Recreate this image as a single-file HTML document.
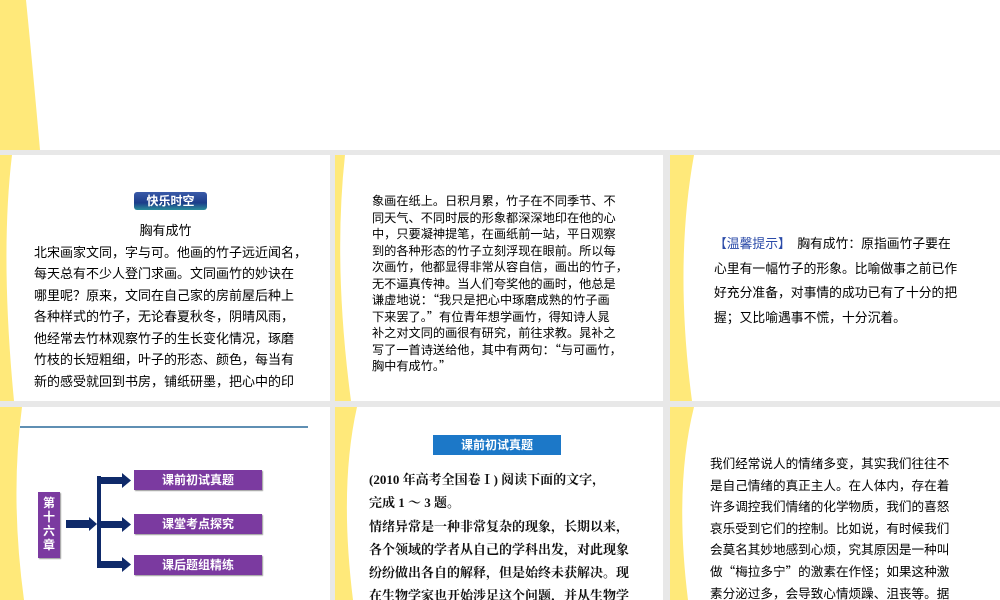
<!DOCTYPE html>
<html><head><meta charset="utf-8"><style>
body{margin:0;width:1000px;height:600px;background:#e8e8e8;position:relative;overflow:hidden;font-family:"Liberation Serif","Noto Serif CJK SC","Noto Sans CJK SC",serif;color:#111}
.s{position:absolute;background:#fff;overflow:hidden}
.s svg.d{position:absolute;left:0;top:0}
.t{position:absolute;font-weight:bold;white-space:nowrap}
.p{position:absolute;background:#7b3aa0;color:#fff;font:bold 12px "Liberation Sans","Noto Sans CJK SC",sans-serif;text-align:center;box-shadow:1px 1px 1px #999}
.cj{font-family:"Noto Sans CJK SC",sans-serif;font-weight:normal;color:#000}
</style></head><body>
<div class="s" style="left:0;top:0;width:1000px;height:150px">
<svg class="d" width="60" height="150"><path d="M0 0H26 Q32 60 40 150H0Z" fill="#ffe97a"/></svg></div>

<div class="s" style="left:0;top:155px;width:330px;height:246px">
<svg class="d" width="40" height="246"><path d="M0 0H12 Q0 100 14 246H0Z" fill="#ffe97a"/></svg>
<div style="position:absolute;left:134px;top:37px;width:73px;height:18px;border-radius:3px;background:linear-gradient(#3a5aa8,#1c3d8a 60%,#2a8c9a);color:#fff;font:bold 12px 'Liberation Sans','Noto Sans CJK SC',sans-serif;text-align:center;line-height:18px">快乐时空</div>
<div class="t cj" style="left:34px;top:64px;font-size:13px;line-height:21.5px">
<div style="text-align:center;width:263px">胸有成竹</div>
北宋画家文同，字与可。他画的竹子远近闻名，<br>每天总有不少人登门求画。文同画竹的妙诀在<br>哪里呢？原来，文同在自己家的房前屋后种上<br>各种样式的竹子，无论春夏秋冬，阴晴风雨，<br>他经常去竹林观察竹子的生长变化情况，琢磨<br>竹枝的长短粗细，叶子的形态、颜色，每当有<br>新的感受就回到书房，铺纸研墨，把心中的印</div></div>

<div class="s" style="left:335px;top:155px;width:328px;height:246px">
<svg class="d" width="40" height="246"><path d="M0 0H10 Q-2 110 16 246H0Z" fill="#ffe97a"/></svg>
<div class="t cj" style="left:37px;top:37px;font-size:12.2px;line-height:16.5px">象画在纸上。日积月累，竹子在不同季节、不<br>同天气、不同时辰的形象都深深地印在他的心<br>中，只要凝神提笔，在画纸前一站，平日观察<br>到的各种形态的竹子立刻浮现在眼前。所以每<br>次画竹，他都显得非常从容自信，画出的竹子，<br>无不逼真传神。当人们夸奖他的画时，他总是<br>谦虚地说：“我只是把心中琢磨成熟的竹子画<br>下来罢了。”有位青年想学画竹，得知诗人晁<br>补之对文同的画很有研究，前往求教。晁补之<br>写了一首诗送给他，其中有两句：“与可画竹，<br>胸中有成竹。”</div></div>

<div class="s" style="left:670px;top:155px;width:330px;height:246px">
<svg class="d" width="40" height="246"><path d="M0 0H24 Q4 110 22 246H0Z" fill="#ffe97a"/></svg>
<div class="t cj" style="left:44px;top:76px;font-size:12.8px;line-height:24.5px"><span style="color:#2a4aa8">【温馨提示】</span>　胸有成竹：原指画竹子要在<br>心里有一幅竹子的形象。比喻做事之前已作<br>好充分准备，对事情的成功已有了十分的把<br>握；又比喻遇事不慌，十分沉着。</div></div>

<div class="s" style="left:0;top:407px;width:330px;height:193px">
<svg class="d" width="330" height="193"><path d="M0 0H22 Q10 90 24 193H0Z" fill="#ffe97a"/>
<line x1="20" y1="20" x2="308" y2="20" stroke="#2a6a9a" stroke-width="1.5"/>
<rect x="66" y="113" width="25" height="8" fill="#0f2a6a"/><path d="M89 110 L97 117 L89 124Z" fill="#0f2a6a"/>
<rect x="97" y="69" width="4" height="92" fill="#0f2a6a"/>
<g fill="#0f2a6a"><rect x="100" y="70" width="24" height="7"/><path d="M122 66L131 73.5L122 81Z"/>
<rect x="100" y="114" width="24" height="7"/><path d="M122 110L131 117.5L122 125Z"/>
<rect x="100" y="154" width="24" height="7"/><path d="M122 150L131 157.5L122 165Z"/></g></svg>
<div class="p" style="left:38px;top:85px;width:22px;height:66px;line-height:14px;padding-top:4px;box-sizing:border-box">第<br>十<br>六<br>章</div>
<div class="p" style="left:134px;top:63px;width:128px;height:20px;line-height:20px">课前初试真题</div>
<div class="p" style="left:134px;top:107px;width:128px;height:20px;line-height:20px">课堂考点探究</div>
<div class="p" style="left:134px;top:148px;width:128px;height:20px;line-height:20px">课后题组精练</div></div>

<div class="s" style="left:335px;top:407px;width:328px;height:193px">
<svg class="d" width="40" height="193"><path d="M0 0H22 Q4 80 18 193H0Z" fill="#ffe97a"/></svg>
<div style="position:absolute;left:98px;top:28px;width:128px;height:20px;background:#1c78c8;color:#fff;font:bold 12px 'Liberation Sans','Noto Sans CJK SC',sans-serif;text-align:center;line-height:20px">课前初试真题</div>
<div class="t" style="left:34px;top:61px;font-size:13px;line-height:23.3px">(2010 年高考全国卷Ⅰ) 阅读下面的文字，<br>完成 1 ～ 3 题。<br>情绪异常是一种非常复杂的现象，长期以来，<br>各个领域的学者从自己的学科出发，对此现象<br>纷纷做出各自的解释，但是始终未获解决。现<br>在生物学家也开始涉足这个问题，并从生物学</div></div>

<div class="s" style="left:670px;top:407px;width:330px;height:193px">
<svg class="d" width="40" height="193"><path d="M0 0H24 Q4 80 18 193H0Z" fill="#ffe97a"/></svg>
<div class="t cj" style="left:40px;top:45px;font-size:12.6px;line-height:21.6px">我们经常说人的情绪多变，其实我们往往不<br>是自己情绪的真正主人。在人体内，存在着<br>许多调控我们情绪的化学物质，我们的喜怒<br>哀乐受到它们的控制。比如说，有时候我们<br>会莫名其妙地感到心烦，究其原因是一种叫<br>做“梅拉多宁”的激素在作怪；如果这种激<br>素分泌过多，会导致心情烦躁、沮丧等。据<br>研究，梅拉多宁也是导致一种叫“冬季抑郁</div></div>
</body></html>
